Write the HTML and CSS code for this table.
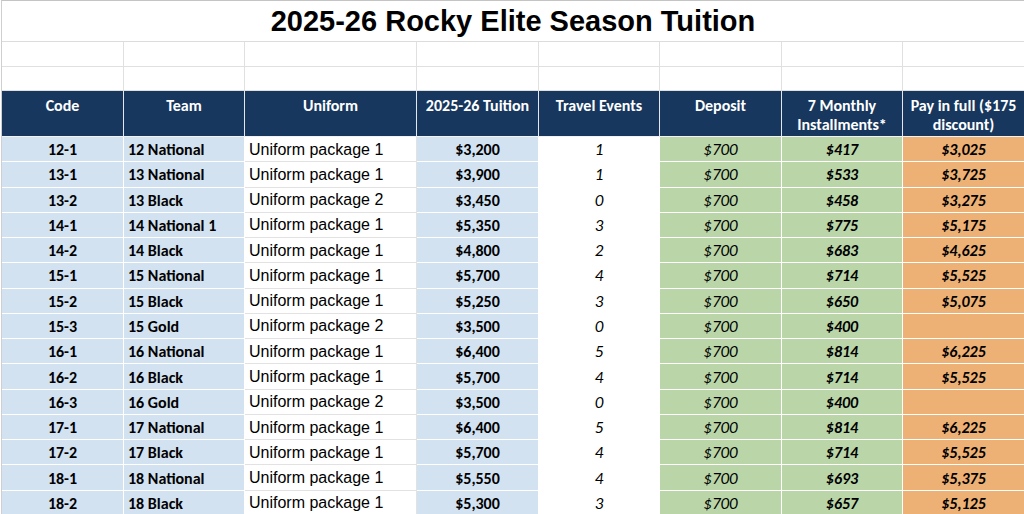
FILE: index.html
```html
<!DOCTYPE html>
<html lang="en">
<head>
<meta charset="utf-8">
<title>2025-26 Rocky Elite Season Tuition</title>
<link rel="stylesheet" href="styles.css">
</head>
<body>
<div class="sheet">
  <div class="title-row"><h1 class="title">2025-26 Rocky Elite Season Tuition</h1></div>
  <div class="row empty"><div></div><div></div><div></div><div></div><div></div><div></div><div></div><div></div></div>
  <div class="row empty short"><div></div><div></div><div></div><div></div><div></div><div></div><div></div><div></div></div>
  <div class="row head">
    <div>Code</div><div>Team</div><div>Uniform</div><div>2025-26 Tuition</div><div>Travel Events</div><div>Deposit</div><div>7 Monthly Installments*</div><div>Pay in full ($175 discount)</div>
  </div>
  <div class="row data"><div class="code">12-1</div><div class="team">12 National</div><div class="uni">Uniform package 1</div><div class="tui">$3,200</div><div class="trav">1</div><div class="dep">$700</div><div class="mon">$417</div><div class="full">$3,025</div></div>
  <div class="row data"><div class="code">13-1</div><div class="team">13 National</div><div class="uni">Uniform package 1</div><div class="tui">$3,900</div><div class="trav">1</div><div class="dep">$700</div><div class="mon">$533</div><div class="full">$3,725</div></div>
  <div class="row data"><div class="code">13-2</div><div class="team">13 Black</div><div class="uni">Uniform package 2</div><div class="tui">$3,450</div><div class="trav">0</div><div class="dep">$700</div><div class="mon">$458</div><div class="full">$3,275</div></div>
  <div class="row data"><div class="code">14-1</div><div class="team">14 National 1</div><div class="uni">Uniform package 1</div><div class="tui">$5,350</div><div class="trav">3</div><div class="dep">$700</div><div class="mon">$775</div><div class="full">$5,175</div></div>
  <div class="row data"><div class="code">14-2</div><div class="team">14 Black</div><div class="uni">Uniform package 1</div><div class="tui">$4,800</div><div class="trav">2</div><div class="dep">$700</div><div class="mon">$683</div><div class="full">$4,625</div></div>
  <div class="row data"><div class="code">15-1</div><div class="team">15 National</div><div class="uni">Uniform package 1</div><div class="tui">$5,700</div><div class="trav">4</div><div class="dep">$700</div><div class="mon">$714</div><div class="full">$5,525</div></div>
  <div class="row data"><div class="code">15-2</div><div class="team">15 Black</div><div class="uni">Uniform package 1</div><div class="tui">$5,250</div><div class="trav">3</div><div class="dep">$700</div><div class="mon">$650</div><div class="full">$5,075</div></div>
  <div class="row data"><div class="code">15-3</div><div class="team">15 Gold</div><div class="uni">Uniform package 2</div><div class="tui">$3,500</div><div class="trav">0</div><div class="dep">$700</div><div class="mon">$400</div><div class="full"></div></div>
  <div class="row data"><div class="code">16-1</div><div class="team">16 National</div><div class="uni">Uniform package 1</div><div class="tui">$6,400</div><div class="trav">5</div><div class="dep">$700</div><div class="mon">$814</div><div class="full">$6,225</div></div>
  <div class="row data"><div class="code">16-2</div><div class="team">16 Black</div><div class="uni">Uniform package 1</div><div class="tui">$5,700</div><div class="trav">4</div><div class="dep">$700</div><div class="mon">$714</div><div class="full">$5,525</div></div>
  <div class="row data"><div class="code">16-3</div><div class="team">16 Gold</div><div class="uni">Uniform package 2</div><div class="tui">$3,500</div><div class="trav">0</div><div class="dep">$700</div><div class="mon">$400</div><div class="full"></div></div>
  <div class="row data"><div class="code">17-1</div><div class="team">17 National</div><div class="uni">Uniform package 1</div><div class="tui">$6,400</div><div class="trav">5</div><div class="dep">$700</div><div class="mon">$814</div><div class="full">$6,225</div></div>
  <div class="row data"><div class="code">17-2</div><div class="team">17 Black</div><div class="uni">Uniform package 1</div><div class="tui">$5,700</div><div class="trav">4</div><div class="dep">$700</div><div class="mon">$714</div><div class="full">$5,525</div></div>
  <div class="row data"><div class="code">18-1</div><div class="team">18 National</div><div class="uni">Uniform package 1</div><div class="tui">$5,550</div><div class="trav">4</div><div class="dep">$700</div><div class="mon">$693</div><div class="full">$5,375</div></div>
  <div class="row data"><div class="code">18-2</div><div class="team">18 Black</div><div class="uni">Uniform package 1</div><div class="tui">$5,300</div><div class="trav">3</div><div class="dep">$700</div><div class="mon">$657</div><div class="full">$5,125</div></div>
</div>
</body>
</html>
```
FILE: styles.css
```css
* { box-sizing: border-box; }
html, body { margin: 0; padding: 0; background: #fff; }
body { overflow: hidden; height: 514px; }

.sheet {
  margin-left: 1px;
  border-left: 1px solid #cfcfcf;
  border-top: 1px solid #c4c4c4;
  font-family: Carlito, Lato, "Liberation Sans", sans-serif;
  color: #000;
}

.title-row {
  height: 41px;
  border-bottom: 1px solid #dcdcdc;
  display: flex;
  align-items: center;
  justify-content: center;
}
.title {
  margin: 0;
  font-family: "Liberation Sans", Arial, sans-serif;
  font-weight: bold;
  font-size: 29px;
  line-height: 1;
  padding-top: 1px;
}

.row {
  display: grid;
  grid-template-columns: 122px 121px 172px 122px 121px 122px 121px 1fr;
}
.row > div {
  border-right: 1px solid #fff;
  border-bottom: 1px solid #fff;
}
.row > div:last-child { border-right: 0; }

.empty { height: 25px; }
.empty.short { height: 24px; }
.empty > div {
  border-right-color: #e0e0e0;
  border-bottom-color: #e0e0e0;
}

.head { height: 46px; }
.head > div {
  background: #17375e;
  color: #fff;
  font-weight: bold;
  font-size: 16px;
  line-height: 19px;
  text-align: center;
  padding: 5px 2px 0;
  border-right-color: #e4e8ee;
  border-bottom-color: #f2f2f2;
}

.data { height: 25.28px; }
.data > div {
  display: flex;
  align-items: center;
  justify-content: center;
  font-size: 16px;
  white-space: nowrap;
  overflow: hidden;
  padding-top: 1px;
}
.code { background: #d2e2f1; font-weight: bold; }
.team { background: #d2e2f1; font-weight: bold; justify-content: flex-start !important; padding-left: 4px; }
.uni {
  background: #fff;
  font-family: "Liberation Sans", Arial, sans-serif;
  justify-content: flex-start !important;
  padding-left: 4px;
  border-right-color: #e2e2e2 !important;
  border-bottom-color: #e2e2e2 !important;
}
.tui { background: #d2e2f1; font-weight: bold; }
.trav { background: #fff; font-style: italic; font-size: 17px !important; }
.dep { background: #bad6a9; font-style: italic; font-size: 17px !important; }
.mon { background: #bad6a9; font-style: italic; font-weight: bold; }
.full { background: #eeb175; font-style: italic; font-weight: bold; }
```
